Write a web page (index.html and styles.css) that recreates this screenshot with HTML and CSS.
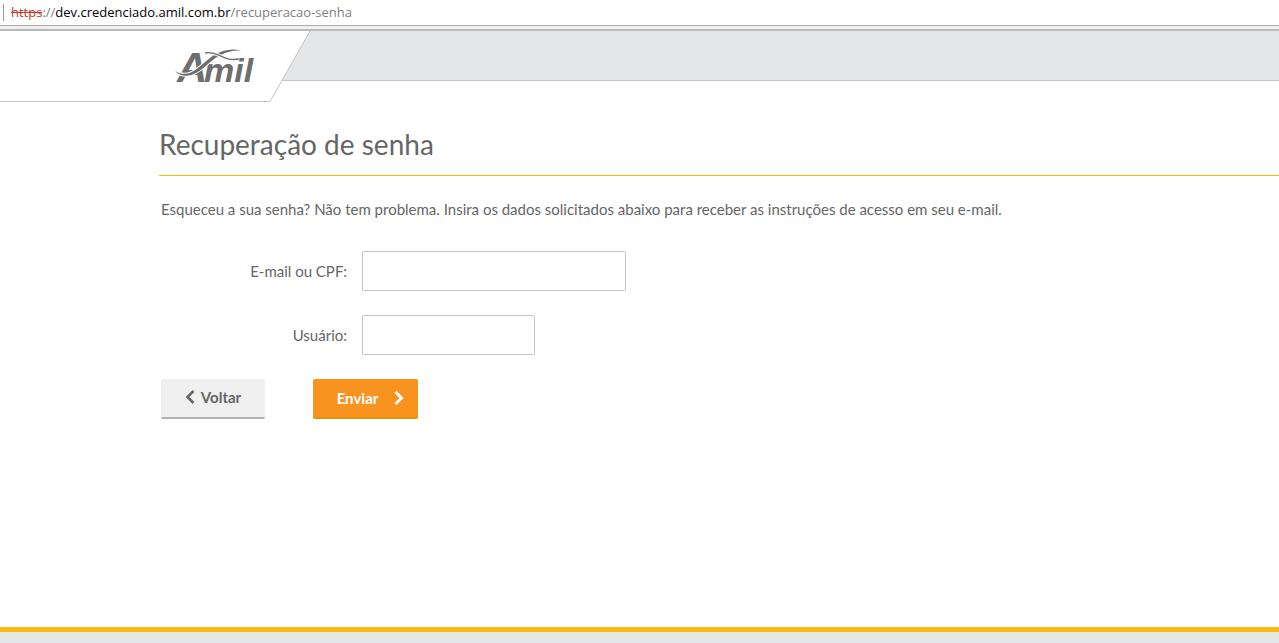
FILE: index.html
```html
<!DOCTYPE html>
<html lang="pt-BR">
<head>
<meta charset="utf-8">
<title>Recuperação de senha</title>
<link rel="stylesheet" href="styles.css">
</head>
<body>
<div class="address"><span class="address-text"><span class="scheme">https</span><span class="muted">://</span>dev.credenciado.amil.com.br<span class="muted">/recuperacao-senha</span></span></div>
<header class="header">
  <svg class="tab" width="311" height="71" viewBox="0 0 311 71" role="img" aria-label="Amil">
    <path d="M0 0H310L270 70.500H0Z" fill="#fff"/>
    <path d="M310 0L270 70.500H0" fill="none" stroke="#c4c4c4"/>
    <g class="logo">
      <text x="177" y="51" class="logo-cap">A</text>
      <text x="204" y="51" class="logo-rest">mil</text>
    </g>
    <path d="M175 40C187 47 195 40 205 31C217 20 230 16 244 20C231 18 219 23 208 33C197 43 185 50 175 40Z" fill="#6e6e6e" stroke="#fff" stroke-width="2" paint-order="stroke"/>
    <path d="M205 22C218 19 222 31 239 28" fill="none" stroke="#fff" stroke-width="3"/>
    <path d="M205 22C218 19 222 31 239 28" fill="none" stroke="#6e6e6e" stroke-width="1.300"/>
  </svg>
  <div class="bar"></div>
</header>
<main class="content">
  <h1 class="title">Recuperação de senha</h1>
  <form class="form">
    <p class="intro">Esqueceu a sua senha? Não tem problema. Insira os dados solicitados abaixo para receber as instruções de acesso em seu e-mail.</p>
    <div class="row"><label class="label" for="email">E-mail ou CPF:</label><input class="input" id="email" type="text"></div>
    <div class="row"><label class="label" for="user">Usuário:</label><input class="input short" id="user" type="text"></div>
    <div class="actions">
      <button class="btn back" type="button"><svg width="10" height="14" viewBox="0 0 10 14" aria-hidden="true"><path d="M8.500 1L2.500 7L8.500 13" fill="none" stroke="currentColor" stroke-width="2.500"/></svg>Voltar</button>
      <button class="btn send" type="submit">Enviar<svg width="10" height="14" viewBox="0 0 10 14" aria-hidden="true"><path d="M1.500 1L7.500 7L1.500 13" fill="none" stroke="currentColor" stroke-width="3"/></svg></button>
    </div>
  </form>
</main>
<footer class="footer"></footer>
</body>
</html>
```
FILE: styles.css
```css
* { box-sizing: border-box; }
body {
  margin: 0;
  min-height: 100vh;
  display: flex;
  flex-direction: column;
  background: #fff;
  color: #666;
  font: 15px/20px Lato, sans-serif;
}
.address {
  height: 31px;
  padding: 4px 3px 0;
  border-bottom: 2px solid #bababa;
  background: linear-gradient(#fff 25px, #a9a9a9 25px, #a9a9a9 26px, #f1f1f1 26px);
  font: 13px/17px "Open Sans", sans-serif;
  color: #000;
}
.address-text { display: block; border-left: 1px solid #999; padding-left: 7px; }
.scheme { color: #c5392b; text-decoration: line-through; }
.muted { color: #808080; }
.header { display: flex; height: 71px; }
.tab { position: relative; flex: none; }
.bar { flex: 1; height: 50px; margin-left: -41px; background: #e5e6e8; border-bottom: 1px solid #c4c4c4; }
.logo { fill: #6e6e6e; font-family: "Liberation Sans", sans-serif; font-weight: bold; font-style: italic; }
.logo-cap { font-size: 42px; }
.logo-rest { font-size: 34px; }
.content { flex: 1; padding: 23px 0 24px 159px; }
.title { margin: 0; padding-bottom: 11px; border-bottom: 1px solid #fdbb11; font-size: 28px; line-height: 39px; font-weight: 400; }
.form { padding: 23px 2px 0; }
.intro { margin: 0 0 32px; }
.row { display: flex; align-items: center; gap: 15px; margin-bottom: 24px; }
.label { width: 186px; text-align: right; }
.input { width: 264px; height: 40px; padding: 0 12px; border: 1px solid #c4c4c4; border-radius: 2px; font: inherit; color: inherit; }
.short { width: 173px; }
.actions { display: flex; gap: 48px; }
.btn { display: flex; align-items: center; justify-content: center; width: 104px; height: 40px; padding: 0; border: 0; border-bottom: 2px solid; border-radius: 2px; font: bold 15px/20px Lato, sans-serif; }
.back { gap: 6px; padding-bottom: 2px; background: #f0f0f0; border-color: #b0b0b0; color: #666; }
.send { gap: 16px; width: 105px; padding-left: 10px; background: #f7931e; border-color: #db9600; color: #fff; }
.footer { height: 16px; border-top: 5px solid #fdbb11; background: #e5e6e8; }
```
